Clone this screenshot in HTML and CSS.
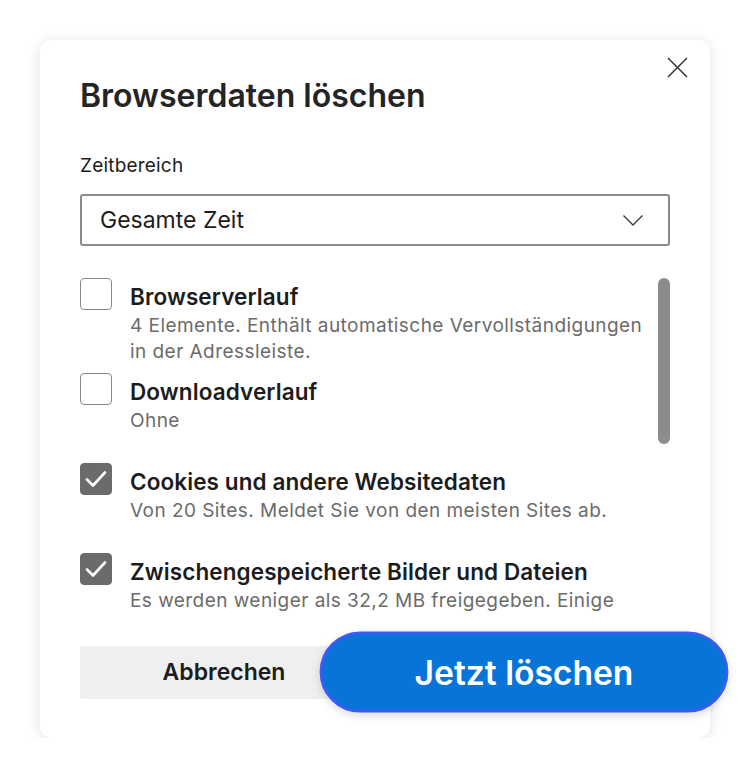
FILE: index.html
```html
<!DOCTYPE html>
<html lang="de">
  <head>
    <meta charset="utf-8" />
    <meta name="viewport" content="width=device-width, initial-scale=1.0" />
    <title>Browserdaten löschen</title>
    <link rel="stylesheet" href="styles.css">
  </head>
  <body>
    <div class="dialog">
      <button class="close" aria-label="Schließen">
        <svg width="21" height="21" viewBox="0 0 21 21">
          <path d="M1 1 L20 20 M20 1 L1 20" stroke="#3a3a3a" stroke-width="1.6" fill="none" />
        </svg>
      </button>

      <h1 class="title">Browserdaten löschen</h1>

      <div class="field-label">Zeitbereich</div>
      <div class="select">
        <span>Gesamte Zeit</span>
        <svg width="20" height="11" viewBox="0 0 20 11">
          <path d="M0.5 0.5 L10 10 L19.5 0.5" stroke="#3a3a3a" stroke-width="1.4" fill="none" />
        </svg>
      </div>

      <!-- list of data types, scrolled to the top -->
      <div class="list">
        <div class="item tight">
          <span class="box"></span>
          <div class="text">
            <div class="name">Browserverlauf</div>
            <div class="desc">4 Elemente. Enthält automatische Vervollständigungen in der Adressleiste.</div>
          </div>
        </div>
        <div class="item">
          <span class="box"></span>
          <div class="text">
            <div class="name">Downloadverlauf</div>
            <div class="desc">Ohne</div>
          </div>
        </div>
        <div class="item">
          <span class="box checked">
            <svg width="22" height="18" viewBox="0 0 22 18">
              <path d="M2 9.5 L8 15.5 L20 2.5" stroke="#fff" stroke-width="2.6" fill="none" stroke-linecap="round" stroke-linejoin="round" />
            </svg>
          </span>
          <div class="text">
            <div class="name">Cookies und andere Websitedaten</div>
            <div class="desc">Von 20 Sites. Meldet Sie von den meisten Sites ab.</div>
          </div>
        </div>
        <div class="item">
          <span class="box checked">
            <svg width="22" height="18" viewBox="0 0 22 18">
              <path d="M2 9.5 L8 15.5 L20 2.5" stroke="#fff" stroke-width="2.6" fill="none" stroke-linecap="round" stroke-linejoin="round" />
            </svg>
          </span>
          <div class="text">
            <div class="name">Zwischengespeicherte Bilder und Dateien</div>
            <div class="desc">Es werden weniger als 32,2 MB freigegeben. Einige Websites werden bei Ihrem nächsten Besuch möglicherweise langsamer geladen.</div>
          </div>
        </div>
        <div class="scroll-thumb"></div>
      </div>

      <div class="actions">
        <button class="btn cancel">Abbrechen</button>
        <button class="btn primary">Jetzt löschen</button>
      </div>
    </div>
  </body>
</html>
```

FILE: styles.css
```css
body {
  margin: 0;
  background-color: #fff;
  font-family: Inter, "Noto Sans", Arial, sans-serif;
  color: #1c1c1c;
}

.dialog {
  position: relative;
  box-sizing: border-box;
  width: 670px;
  height: 698px;
  margin: 40px 0 0 40px;
  padding: 36px 40px 0 40px;
  background-color: #fff;
  border-radius: 12px;
  box-shadow: 0 2px 14px rgba(0, 0, 0, 0.12);
}

.close {
  position: absolute;
  top: 17px;
  right: 22px;
  padding: 0;
  border: none;
  background: none;
  line-height: 0;
}

.title {
  margin: 0;
  font-size: 32px;
  font-weight: 600;
  line-height: 40px;
  color: #242424;
}

.field-label {
  margin-top: 38px;
  font-size: 19px;
  line-height: 24px;
  letter-spacing: 0.2px;
}

.select {
  display: flex;
  align-items: center;
  justify-content: space-between;
  box-sizing: border-box;
  height: 52px;
  margin-top: 16px;
  padding: 0 25px 0 18px;
  border: 2px solid #8a8a8a;
  border-radius: 3px;
  font-size: 23px;
}

.list {
  position: relative;
  height: 336px;
  margin-top: 32px;
  overflow: hidden;
}

.item {
  display: flex;
  gap: 18px;
  margin-bottom: 29px;
  padding-right: 20px;
}

.item.tight {
  margin-bottom: 8px;
}

.text {
  padding-top: 3px;
}

.box {
  flex: none;
  display: flex;
  align-items: center;
  justify-content: center;
  box-sizing: border-box;
  width: 32px;
  height: 32px;
  border: 1.5px solid #8a8a8a;
  border-radius: 4px;
}

.box.checked {
  background-color: #6b6b6b;
  border-color: #6b6b6b;
}

.name {
  font-size: 22.5px;
  font-weight: 600;
  line-height: 32px;
  letter-spacing: 0.1px;
}

.desc {
  font-size: 19px;
  line-height: 26px;
  letter-spacing: 0.45px;
  color: #6b6b6b;
}

.scroll-thumb {
  position: absolute;
  top: 0;
  right: 0;
  width: 12px;
  height: 166px;
  border-radius: 6px;
  background-color: #8c8c8c;
}

.actions {
  display: flex;
  align-items: center;
  gap: 10px;
  margin-top: 29px;
}

.btn {
  flex: 1;
  height: 53px;
  border: none;
  font-family: inherit;
  font-weight: 600;
}

.cancel {
  background-color: #efefef;
  border-radius: 3px;
  font-size: 23px;
  color: #1c1c1c;
}

/* zoomed primary button, sits over the cancel one */
.primary {
  height: 58px;
  border: 2px solid #3d5af4;
  border-radius: 30px;
  background-color: #0874d8;
  color: #fff;
  font-size: 24px;
  transform: scale(1.4);
  box-shadow: 0 2px 6px rgba(0, 0, 0, 0.15);
}
```
